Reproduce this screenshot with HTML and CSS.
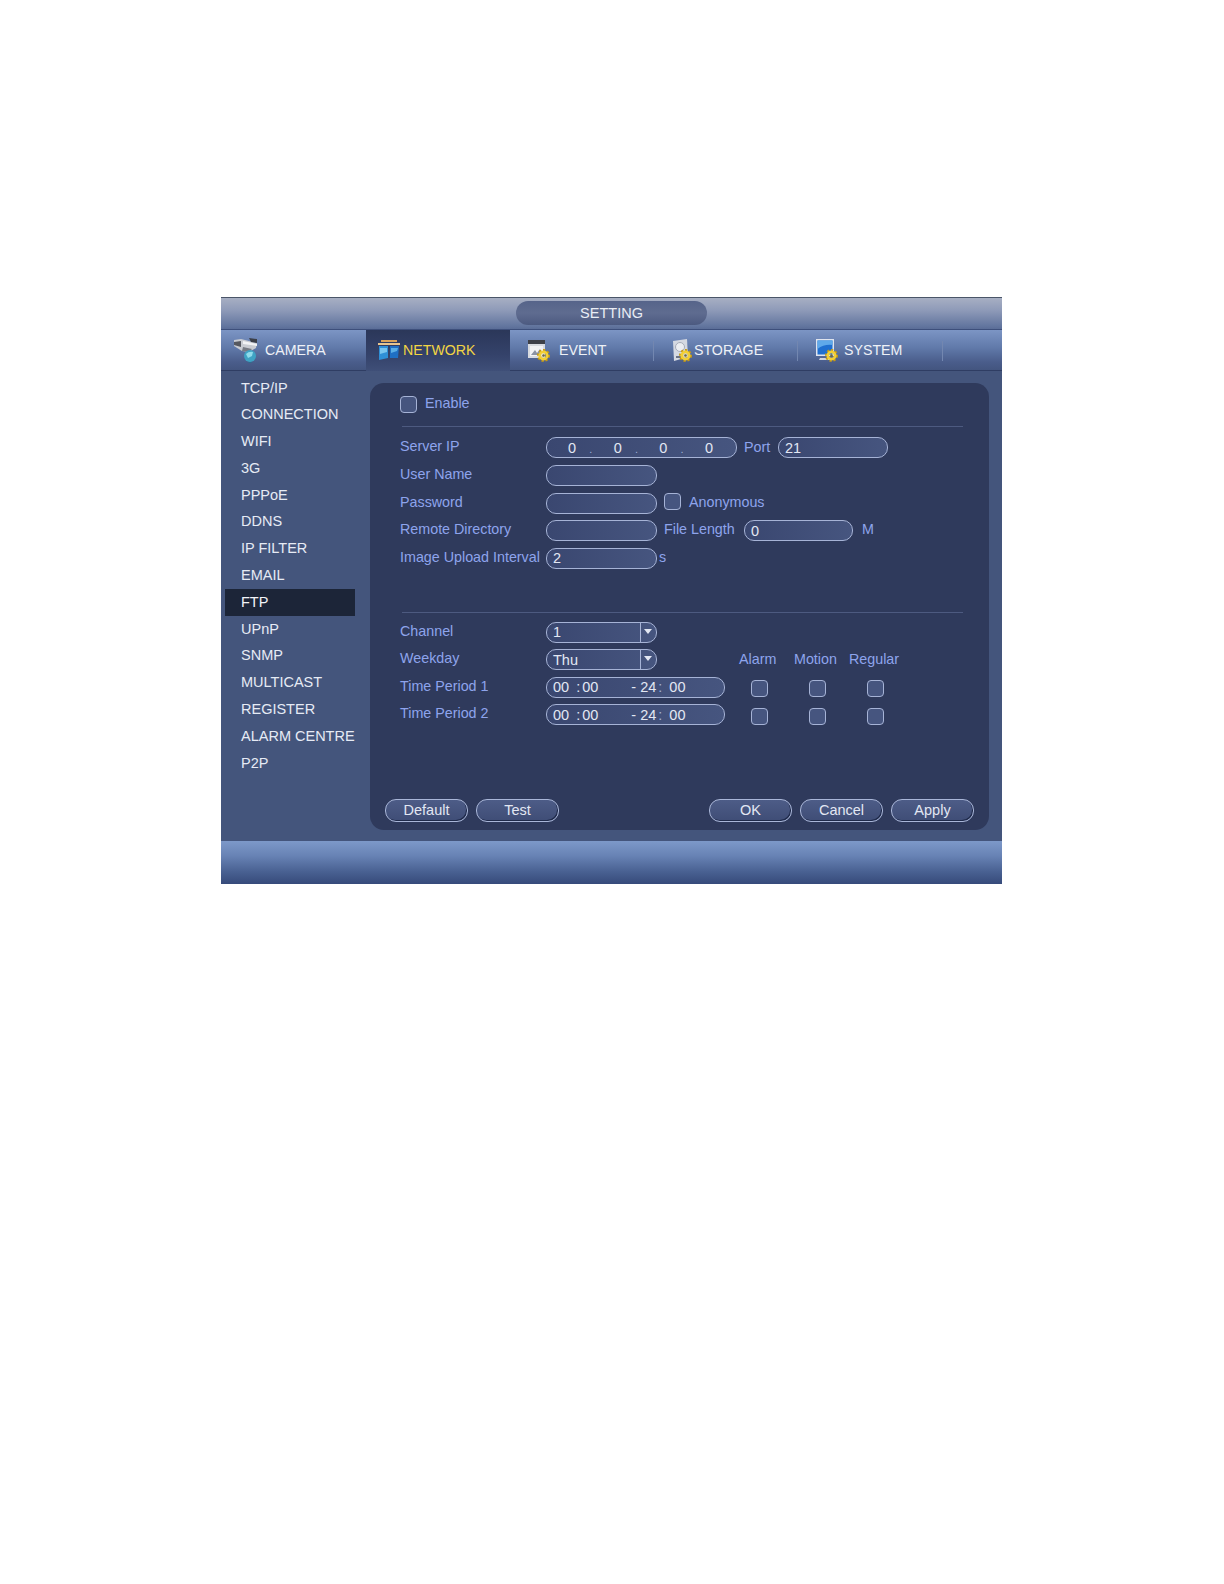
FILE: index.html
```html
<!DOCTYPE html>
<html>
<head>
    <title>Setting - FTP</title>
    <link rel="stylesheet" href="styles.css">
</head>
<body>
    <svg class="defs" width="0" height="0">
        <symbol id="gear" viewBox="0 0 12 12">
            <circle cx="6" cy="6" r="4.8" fill="none" stroke="#c79a12" stroke-width="2.4" stroke-dasharray="2 1.6"/>
            <circle cx="6" cy="6" r="3.4" fill="none" stroke="#f2cf35" stroke-width="2.6"/>
            <circle cx="6" cy="6" r="1.2" fill="#6f6a3a"/>
        </symbol>
    </svg>

    <div class="dvr">
        <div class="title-bar">
            <div class="title-pill">SETTING</div>
        </div>

        <div class="tabs">
            <div class="tab tab-camera">
                <svg width="25" height="25" viewBox="0 0 25 25">
                    <path d="M1 2 L8 1 L24 5 L23 10 L16 14 L9 13 L1 8 Z" fill="#c9ccd2"/>
                    <path d="M1 4 L8 3 L8 9 L1 7 Z" fill="#55585f"/>
                    <path d="M10 3 L24 6 L24 8 L10 6 Z" fill="#f2f3f5"/>
                    <path d="M16 0 L24 1 L24 5 L18 4 Z" fill="#3b3f48"/>
                    <path d="M10 9 L19 11 L16 14 L9 13 Z" fill="#777b84"/>
                    <circle cx="17" cy="18" r="6" fill="#3fa3c4"/>
                    <path d="M13 16 Q16 13 20 14 L19 18 L15 20 Z" fill="#8fdcec"/>
                    <path d="M14 24 L20 24 L17 25 Z" fill="#2c6f8f"/>
                </svg>
                <span>CAMERA</span>
            </div>
            <div class="tab tab-network active">
                <svg width="22" height="20" viewBox="0 0 22 20">
                    <rect x="3" y="0" width="16" height="2" fill="#d9a35a"/>
                    <rect x="0" y="3" width="22" height="2" fill="#e8c58e"/>
                    <path d="M1 6 L10 6 L10 18 L1 20 Z" fill="#2f8fd6"/>
                    <path d="M12 6 L21 6 L20 18 L12 18 Z" fill="#1f6fc4"/>
                    <path d="M2 8 L9 8 L9 12 L2 14 Z" fill="#79c4ee"/>
                    <path d="M13 8 L20 8 L19 11 L13 13 Z" fill="#5aaee6"/>
                </svg>
                <span>NETWORK</span>
            </div>
            <div class="tab tab-event">
                <svg width="23" height="23" viewBox="0 0 23 23">
                    <rect x="1" y="1" width="17" height="18" fill="#d8dbe0"/>
                    <rect x="1" y="1" width="17" height="4" fill="#3d4048"/>
                    <rect x="3" y="7" width="13" height="10" fill="#f2f3f5"/>
                    <path d="M4 16 L8 11 L10 14 L13 10 L13 16 Z" fill="#8b93a3"/>
                    <use href="#gear" x="10" y="10" width="13" height="13"/>
                </svg>
                <span>EVENT</span>
            </div>
            <div class="tab tab-storage">
                <svg width="19" height="23" viewBox="0 0 19 23">
                    <path d="M0 2 L14 0 L15 18 L1 22 Z" fill="#d5d9e2"/>
                    <circle cx="7" cy="8" r="4.5" fill="#eceef2" stroke="#a7acb8"/>
                    <rect x="3" y="17" width="6" height="2" fill="#6b7283"/>
                    <use href="#gear" x="6" y="10" width="13" height="13"/>
                </svg>
                <span>STORAGE</span>
            </div>
            <div class="tab tab-system">
                <svg width="22" height="23" viewBox="0 0 22 23">
                    <rect x="0" y="0" width="18" height="17" fill="#dfe4ee"/>
                    <rect x="1.5" y="1.5" width="15" height="14" fill="#1f6fd0"/>
                    <path d="M1.5 10 Q8 5 16.5 6 L16.5 1.5 L1.5 1.5 Z" fill="#5fa9ea"/>
                    <path d="M4 19 L14 19 L15 21 L3 21 Z" fill="#cfd4de"/>
                    <use href="#gear" x="9" y="10" width="13" height="13"/>
                </svg>
                <span>SYSTEM</span>
            </div>
            <div class="tab tab-rest"></div>
        </div>

        <div class="content">
            <ul class="side-menu">
                <li>TCP/IP</li>
                <li>CONNECTION</li>
                <li>WIFI</li>
                <li>3G</li>
                <li>PPPoE</li>
                <li>DDNS</li>
                <li>IP FILTER</li>
                <li>EMAIL</li>
                <li class="selected">FTP</li>
                <li>UPnP</li>
                <li>SNMP</li>
                <li>MULTICAST</li>
                <li>REGISTER</li>
                <li>ALARM CENTRE</li>
                <li>P2P</li>
            </ul>

            <div class="panel">
                <div class="form">
                    <div class="enable-row">
                        <span class="check"></span>
                        <span class="text">Enable</span>
                    </div>
                    <div class="divider"></div>

                    <div class="rows">
                        <div class="row server-row">
                            <label>Server IP</label>
                            <div class="field ip">
                                <span>0</span><i>.</i><span>0</span><i>.</i><span>0</span><i>.</i><span>0</span>
                            </div>
                            <span class="text port-label">Port</span>
                            <div class="field port">21</div>
                        </div>
                        <div class="row">
                            <label>User Name</label>
                            <div class="field"></div>
                        </div>
                        <div class="row">
                            <label>Password</label>
                            <div class="field"></div>
                            <span class="check anon-check"></span>
                            <span class="text">Anonymous</span>
                        </div>
                        <div class="row">
                            <label>Remote Directory</label>
                            <div class="field"></div>
                            <span class="text file-label">File Length</span>
                            <div class="field file">0</div>
                            <span class="text unit">M</span>
                        </div>
                        <div class="row">
                            <label>Image Upload Interval</label>
                            <div class="field">2</div>
                            <span class="text seconds">s</span>
                        </div>
                    </div>

                    <div class="divider second"></div>

                    <div class="rows">
                        <div class="row">
                            <label>Channel</label>
                            <div class="field select">1<span class="arrow"></span></div>
                        </div>
                        <div class="row">
                            <label>Weekday</label>
                            <div class="field select">Thu<span class="arrow"></span></div>
                            <div class="heads">
                                <span>Alarm</span>
                                <span>Motion</span>
                                <span>Regular</span>
                            </div>
                        </div>
                        <div class="row">
                            <label>Time Period 1</label>
                            <div class="field time">
                                <span>00</span><span>:</span><span>00</span><span>-</span><span>24</span><span>:</span><span>00</span>
                            </div>
                            <div class="marks">
                                <span class="check"></span>
                                <span class="check"></span>
                                <span class="check"></span>
                            </div>
                        </div>
                        <div class="row">
                            <label>Time Period 2</label>
                            <div class="field time">
                                <span>00</span><span>:</span><span>00</span><span>-</span><span>24</span><span>:</span><span>00</span>
                            </div>
                            <div class="marks">
                                <span class="check"></span>
                                <span class="check"></span>
                                <span class="check"></span>
                            </div>
                        </div>
                    </div>
                </div>

                <div class="actions">
                    <div class="btn-group">
                        <button>Default</button>
                        <button>Test</button>
                    </div>
                    <div class="btn-group">
                        <button>OK</button>
                        <button>Cancel</button>
                        <button>Apply</button>
                    </div>
                </div>
            </div>
        </div>

        <div class="footer-bar"></div>
    </div>
</body>
</html>
```

FILE: styles.css
```css
body {
    margin: 0;
    background: white;
    font-family: 'Liberation Sans', Arial, sans-serif;
    font-size: 14.5px;
}

.defs {
    position: absolute;
}

.dvr {
    width: 781px;
    height: 587px;
    margin: 297px 0 0 221px;
    display: flex;
    flex-direction: column;
    background: #44557c;
}

.title-bar {
    height: 32px;
    flex: none;
    box-sizing: border-box;
    border-top: 1px solid #4a5568;
    background: linear-gradient(#a7afc3, #8e9ab8 40%, #63769f 90%, #5a6d97);
    display: flex;
    justify-content: center;
    padding-top: 3px;
}

.title-pill {
    width: 191px;
    height: 24px;
    border-radius: 12px;
    background: linear-gradient(#56648a, #5f6c90 50%, #4c5a80);
    color: #e9edf5;
    text-align: center;
    line-height: 24px;
}

.tabs {
    height: 42px;
    flex: none;
    box-sizing: border-box;
    display: flex;
    border-top: 1px solid #3d4f7b;
    border-bottom: 1px solid #2f3d63;
    background: linear-gradient(#7c95c4, #6079a9 45%, #4a5d8b 80%, #43557f);
}

.tab {
    position: relative;
    flex: none;
    display: flex;
    align-items: center;
    color: #eef1f7;
    font-size: 14.2px;
}

.tab::after {
    content: '';
    position: absolute;
    right: 0;
    top: 11px;
    height: 20px;
    width: 1px;
    background: #7387b0;
}

.tab-camera {
    width: 145px;
    padding-left: 12px;
    box-sizing: border-box;
    gap: 7px;
}

.tab-network {
    width: 144px;
    padding-left: 12px;
    box-sizing: border-box;
    gap: 3px;
}

.tab-event {
    width: 144px;
    padding-left: 17px;
    box-sizing: border-box;
    gap: 9px;
}

.tab-storage {
    width: 144px;
    padding-left: 19px;
    box-sizing: border-box;
    gap: 2px;
}

.tab-system {
    width: 145px;
    padding-left: 18px;
    box-sizing: border-box;
    gap: 6px;
}

.tab-rest {
    flex: 1;
}

.tab-camera::after,
.tab-network::after,
.tab-rest::after {
    display: none;
}

.tab.active {
    color: #f2d544;
    background: linear-gradient(#2b3759, #34426a 60%, #3f4f78);
    margin-bottom: -1px;
    padding-bottom: 1px;
}

.content {
    flex: 1;
    display: flex;
    min-height: 0;
}

.side-menu {
    width: 149px;
    flex: none;
    margin: 0;
    padding: 3.5px 0 0;
    list-style: none;
    color: #e6ebf5;
}

.side-menu li {
    height: 26.8px;
    line-height: 26.8px;
    margin-left: 4px;
    width: 130px;
    padding-left: 16px;
    box-sizing: border-box;
    white-space: nowrap;
}

.side-menu .selected {
    background: #1c2538;
    color: #f2f4f8;
}

.panel {
    flex: 1;
    margin: 12px 13px 11px 0;
    background: #2f3a5c;
    border-radius: 14px;
    display: flex;
    flex-direction: column;
}

.form {
    padding: 13px 26px 0 30px;
    font-size: 14.3px;
    color: #8ea4ec;
}

.enable-row {
    display: flex;
    align-items: center;
    height: 17px;
    gap: 8px;
}

.enable-row .text {
    margin-bottom: 3px;
}

.divider {
    height: 1px;
    margin: 13px 0 10px 2px;
    background: #4d5a80;
}

.divider.second {
    margin-top: 43px;
    margin-bottom: 9px;
}

.rows {
    display: flex;
    flex-direction: column;
    gap: 6.5px;
}

.server-row {
    margin-bottom: 0.5px;
}

.row {
    display: flex;
    align-items: center;
    height: 21px;
}

.row label {
    width: 146px;
    flex: none;
    margin-bottom: 3px;
    white-space: nowrap;
}

.text {
    white-space: nowrap;
}

.row .text {
    margin-bottom: 3px;
}

.row .port-label {
    margin-bottom: 1px;
}

.field {
    width: 111px;
    height: 21px;
    flex: none;
    box-sizing: border-box;
    border: 1.5px solid #a6b3d6;
    border-radius: 10px;
    padding-left: 6px;
    background: linear-gradient(90deg, #3a4770, #46557f);
    color: #e2e7f3;
    font-size: 14.5px;
    line-height: 18px;
    display: flex;
    align-items: center;
}

.ip {
    width: 191px;
    padding: 0 23px 0 21px;
    justify-content: space-between;
}

.ip i {
    font-style: normal;
    font-size: 11px;
    color: #9fb0d8;
    margin: 2px 4px 0 -4px;
}

.port-label {
    margin-left: 7px;
    width: 34px;
}

.port {
    width: 110px;
}

.anon-check {
    margin-left: 7px;
    margin-right: 8px;
    margin-top: -4px;
}

.file-label {
    margin-left: 7px;
    width: 80px;
}

.file {
    width: 109px;
}

.unit {
    margin-left: 9px;
}

.seconds {
    margin-left: 2px;
}

.select {
    position: relative;
}

.arrow {
    position: absolute;
    top: 0;
    bottom: 0;
    right: 0;
    width: 15px;
    border-left: 1.5px solid #a6b3d6;
}

.arrow::after {
    content: '';
    position: absolute;
    left: 3px;
    top: 6px;
    border-left: 4px solid transparent;
    border-right: 4px solid transparent;
    border-top: 5px solid #e2e7f3;
}

.time {
    width: 179px;
}

.time span:nth-child(2) {
    margin-left: 7px;
}

.time span:nth-child(3) {
    margin-left: 2px;
}

.time span:nth-child(4) {
    margin-left: 33px;
}

.time span:nth-child(5) {
    margin-left: 4px;
}

.time span:nth-child(6) {
    margin-left: 2px;
    color: #9fb0d8;
}

.time span:nth-child(7) {
    margin-left: 7px;
}

.heads {
    display: flex;
    margin-left: 82px;
    margin-bottom: 2px;
}

.heads span {
    width: 55px;
}

.marks {
    display: flex;
    gap: 41px;
    margin-left: 26px;
    margin-top: 3px;
}

.check {
    display: block;
    flex: none;
    width: 17px;
    height: 17px;
    box-sizing: border-box;
    border: 1.5px solid #a6b3d6;
    border-radius: 4px;
    background: #46557f;
}

.actions {
    margin-top: auto;
    padding: 0 15px 8px 15px;
    display: flex;
    justify-content: space-between;
}

.btn-group {
    display: flex;
    gap: 8px;
}

button {
    width: 83px;
    height: 23px;
    padding: 0 0 2px;
    border: 1px solid #a9b6d8;
    border-radius: 11px;
    background: linear-gradient(#4d5c87, #3f4d76);
    box-shadow: inset -1px -1px 0 #1f2a4a;
    color: #e2e7f3;
    font-family: inherit;
    font-size: 14.5px;
}

.footer-bar {
    height: 43px;
    flex: none;
    background: linear-gradient(#7d99c9, #6782b4 35%, #4a6293 70%, #364a7a);
}
```
